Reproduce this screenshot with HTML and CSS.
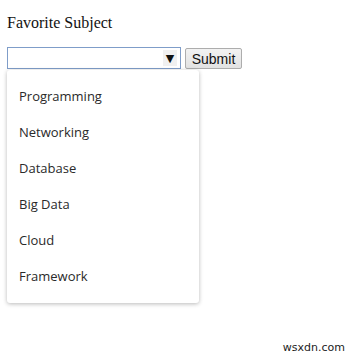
FILE: index.html
```html
<!DOCTYPE html>
<html>
<head>
<meta charset="utf-8">
<link rel="stylesheet" href="styles.css">
</head>
<body>
<div class="page">
  <p class="title">Favorite Subject</p>
  <div class="form-row">
    <div class="combo">
      <div class="select-box">
        <span class="arrow">▼</span>
      </div>
      <ul class="menu">
        <li>Programming</li>
        <li>Networking</li>
        <li>Database</li>
        <li>Big Data</li>
        <li>Cloud</li>
        <li>Framework</li>
      </ul>
    </div>
    <button class="submit">Submit</button>
  </div>
</div>
<div class="watermark">wsxdn.com</div>
</body>
</html>
```
FILE: styles.css
```css
html, body {
  margin: 0;
  padding: 0;
  background: #fff;
}
body {
  width: 356px;
  height: 360px;
  overflow: hidden;
  position: relative;
  font-family: "Liberation Serif", "Times New Roman", serif;
}
.page {
  padding: 13px 0 0 7px;
}
.title {
  margin: 0;
  font-size: 16px;
  line-height: 19px;
  color: #111;
}
.form-row {
  margin-top: 15px;
  display: flex;
  align-items: flex-start;
  gap: 4px;
}
.combo {
  position: relative;
  width: 174px;
}
.select-box {
  box-sizing: border-box;
  width: 174px;
  height: 22px;
  border: 1px solid #7f9dc9;
  background: #fff;
  display: flex;
  justify-content: flex-end;
  align-items: center;
  padding-right: 3px;
}
.arrow {
  display: flex;
  align-items: center;
  justify-content: center;
  width: 14px;
  height: 16px;
  background: #f0f0f0;
  font-family: "DejaVu Sans", sans-serif;
  font-size: 11px;
  color: #111;
}
.menu {
  position: absolute;
  left: 0;
  top: 23px;
  width: 192px;
  margin: 0;
  padding: 8px 0 9px;
  list-style: none;
  background: #fff;
  border-radius: 3px;
  box-shadow: 0 1px 4px rgba(0,0,0,0.28);
  font-family: "Open Sans", "Noto Sans", sans-serif;
  font-size: 13px;
  color: #2a2a2a;
}
.menu li {
  height: 36px;
  line-height: 36px;
  padding-left: 12px;
}
.submit {
  box-sizing: border-box;
  height: 21px;
  width: 57px;
  margin-top: 1px;
  padding: 0;
  border: 1px solid #adadad;
  border-radius: 2px;
  background: linear-gradient(#f2f2f2, #e2e2e2);
  font-family: "Liberation Sans", Arial, sans-serif;
  font-size: 14px;
  color: #111;
}
.watermark {
  position: absolute;
  right: 11px;
  bottom: 6px;
  font-family: "DejaVu Sans", sans-serif;
  font-size: 11px;
  color: #222;
}
```
